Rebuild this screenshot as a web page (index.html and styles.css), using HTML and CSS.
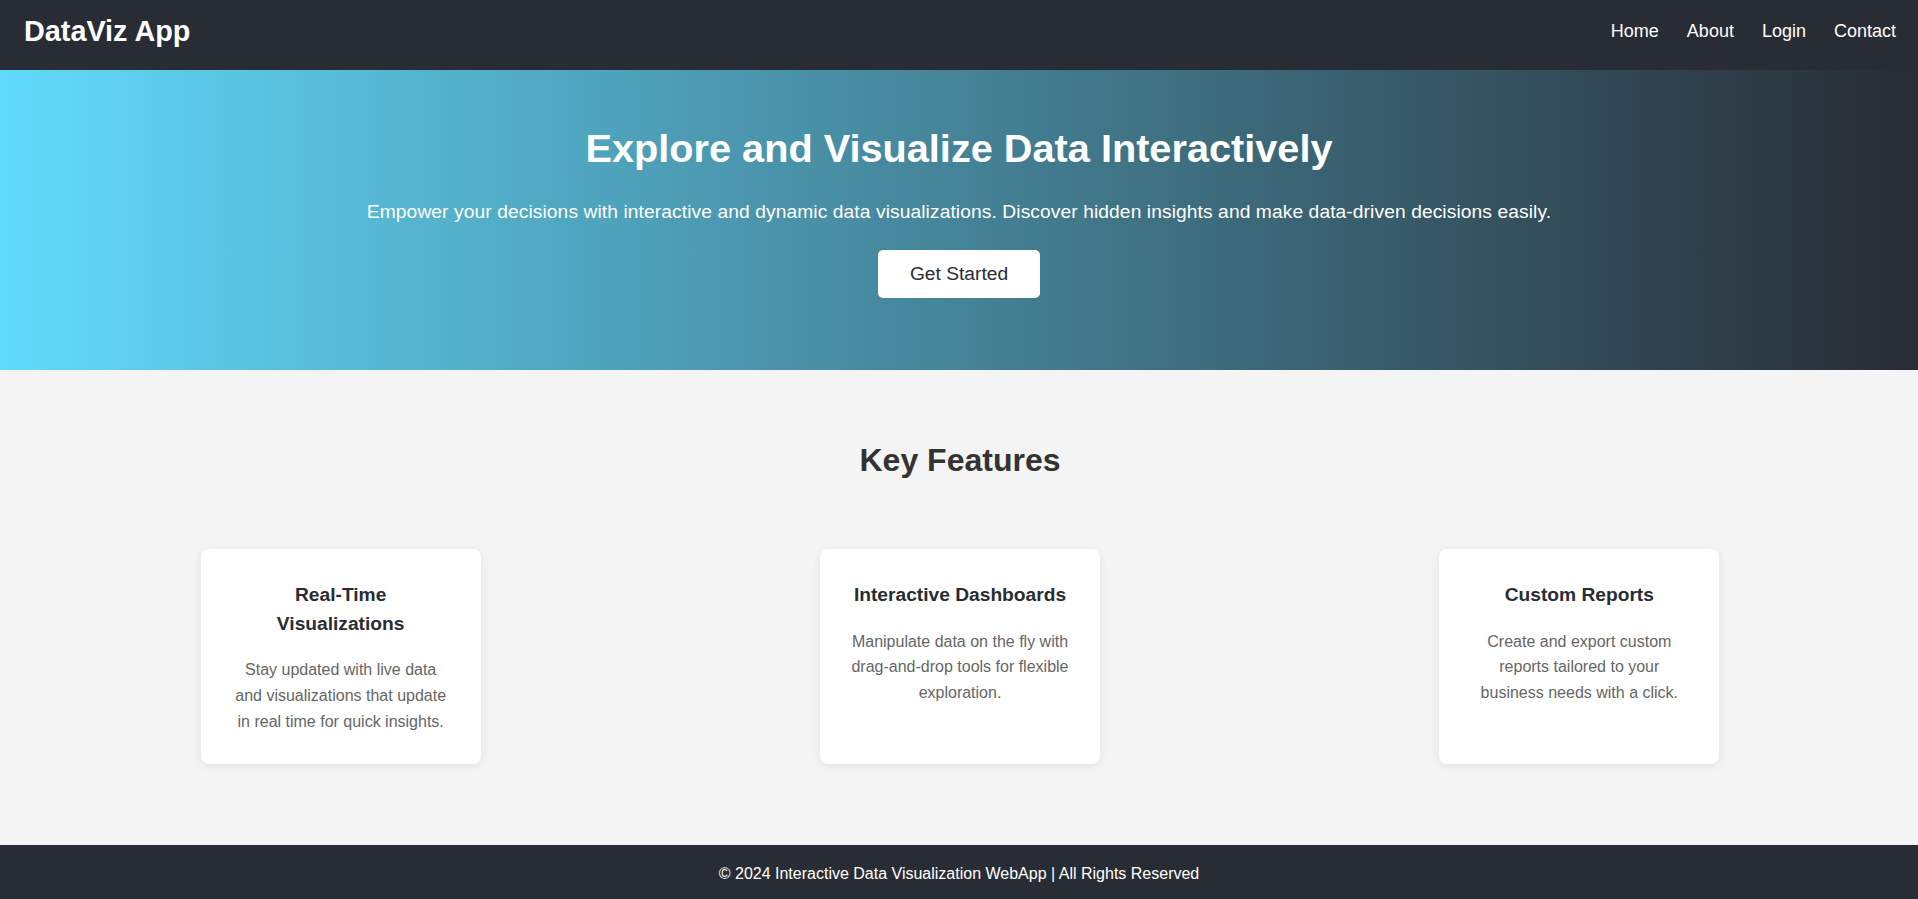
FILE: index.html
```html
<!DOCTYPE html>
<html lang="en">
<head>
<meta charset="UTF-8">
<title>DataViz App</title>
<link rel="stylesheet" href="styles.css">
</head>
<body>
<header class="topbar">
  <div class="logo">DataViz App</div>
  <nav class="nav">
    <a href="#">Home</a>
    <a href="#">About</a>
    <a href="#">Login</a>
    <a href="#">Contact</a>
  </nav>
</header>
<section class="hero">
  <h1 class="hero-title">Explore and Visualize Data Interactively</h1>
  <p class="hero-sub">Empower your decisions with interactive and dynamic data visualizations. Discover hidden insights and make data-driven decisions easily.</p>
  <button class="hero-btn">Get Started</button>
</section>
<section class="features">
  <h2 class="features-title">Key Features</h2>
  <div class="cards">
    <div class="card">
      <h3 class="card-title">Real-Time Visualizations</h3>
      <p class="card-text">Stay updated with live data and visualizations that update in real time for quick insights.</p>
    </div>
    <div class="card">
      <h3 class="card-title">Interactive Dashboards</h3>
      <p class="card-text">Manipulate data on the fly with drag-and-drop tools for flexible exploration.</p>
    </div>
    <div class="card">
      <h3 class="card-title">Custom Reports</h3>
      <p class="card-text">Create and export custom reports tailored to your business needs with a click.</p>
    </div>
  </div>
</section>
<footer class="footer">
  © 2024 Interactive Data Visualization WebApp | All Rights Reserved
</footer>
</body>
</html>
```

FILE: styles.css
```css
* { box-sizing: border-box; }

body {
  margin: 0;
  font-family: "Liberation Sans", Arial, Helvetica, sans-serif;
  line-height: 1.6;
  background: #f4f4f4;
  color: #333;
}

.topbar {
  height: 70px;
  background: #282c34;
  color: #fff;
  display: flex;
  align-items: center;
  justify-content: space-between;
  padding: 0 22px 7px 24px;
}

.logo {
  font-size: 28.8px;
  font-weight: bold;
  line-height: 1.15;
}

.nav {
  display: flex;
  gap: 28px;
}

.nav a {
  color: #fff;
  text-decoration: none;
  font-size: 18px;
  line-height: 1.15;
}

.hero {
  height: 300px;
  background: linear-gradient(to right, #61dafb, #282c34);
  color: #fff;
  text-align: center;
  padding-top: 55px;
}

.hero-title {
  margin: 0 0 24px;
  font-size: 39.7px;
  line-height: 1.2;
  font-weight: bold;
}

.hero-sub {
  margin: 0 0 23px;
  font-size: 19.2px;
  line-height: 1.6;
  letter-spacing: 0.1px;
}

.hero-btn {
  font-family: inherit;
  font-size: 19.2px;
  line-height: normal;
  padding: 12.8px 32px;
  background: #fff;
  color: #282c34;
  border: none;
  border-radius: 5px;
  cursor: pointer;
}

.features {
  padding: 65px 29px 81px 31px;
  text-align: center;
}

.features-title {
  margin: 0 0 63px;
  font-size: 32px;
  color: #333;
}

.cards {
  display: flex;
  justify-content: space-around;
  align-items: stretch;
}

.card {
  width: 280px;
  background: #fff;
  border-radius: 8px;
  padding: 32px 31px 30px;
  box-shadow: 0 2px 10px rgba(0, 0, 0, 0.08);
}

.card-title {
  margin: 0 0 18.6px;
  font-size: 19.2px;
  line-height: 1.5;
  color: #282c34;
}

.card-text {
  margin: 0;
  font-size: 16px;
  color: #666;
}

.footer {
  background: #282c34;
  color: #fff;
  text-align: center;
  padding: 16px;
  font-size: 16px;
}
```
